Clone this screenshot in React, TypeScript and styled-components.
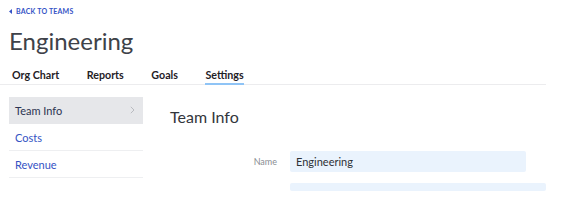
import React from "react";
import styled, { createGlobalStyle } from "styled-components";

const GlobalStyle = createGlobalStyle`
  body {
    margin: 0;
    background: #ffffff;
    font-family: Lato, "Open Sans", Arial, sans-serif;
    color: #333;
  }
`;

const Page = styled.div`
  width: 579px;
  height: 204px;
  overflow: hidden;
`;

const Header = styled.div`
  padding: 7px 0 0 9px;
`;

const BackLink = styled.a`
  display: flex;
  align-items: center;
  gap: 4px;
  font-size: 7px;
  font-weight: 700;
  letter-spacing: 0.2px;
  color: #3553c6;
  text-transform: uppercase;
  text-decoration: none;
  line-height: 9px;
`;

const Title = styled.h1`
  margin: 11px 0 0;
  font-size: 24px;
  font-weight: 400;
  line-height: 28px;
  color: #3e4249;
`;

const TabBar = styled.div`
  display: flex;
  gap: 27.5px;
  width: 534px;
  margin-top: 13px;
  padding-left: 12px;
  border-bottom: 1px solid #ececee;
`;

const Tab = styled.div<{ $active?: boolean }>`
  position: relative;
  font-size: 10.7px;
  font-weight: 700;
  line-height: 14px;
  padding-bottom: 2px;
  color: #1f2126;

  &::after {
    content: "";
    position: absolute;
    left: 0;
    right: 0;
    bottom: -1px;
    height: 2px;
    background: ${({ $active }) => ($active ? "#8fc4f6" : "transparent")};
  }
`;

const Body = styled.div`
  display: flex;
  padding: 12px 0 0 9px;
`;

const Sidebar = styled.div`
  width: 134px;
  display: flex;
  flex-direction: column;
`;

const SideItem = styled.div<{ $active?: boolean }>`
  display: flex;
  align-items: center;
  justify-content: space-between;
  height: 26px;
  padding: 0 8px 0 6px;
  font-size: 11px;
  color: ${({ $active }) => ($active ? "#2c3452" : "#3453c4")};
  background: ${({ $active }) => ($active ? "#e6e7ea" : "transparent")};
  border-bottom: 1px solid ${({ $active }) => ($active ? "#e6e7ea" : "#eeeff1")};
`;

const Main = styled.div`
  margin-left: 27px;
  flex: 1;
`;

const SectionTitle = styled.h2`
  margin: 10px 0 0;
  font-size: 16px;
  font-weight: 400;
  line-height: 20px;
  color: #33363c;
`;

const Form = styled.div`
  display: flex;
  flex-direction: column;
  gap: 11px;
  margin-top: 24px;
`;

const Row = styled.div`
  display: flex;
  align-items: center;
`;

const Label = styled.label`
  width: 107px;
  text-align: right;
  padding-right: 13px;
  font-size: 9px;
  color: #8a8d93;
`;

const Input = styled.div<{ $width: number; $height: number }>`
  width: ${({ $width }) => $width}px;
  height: ${({ $height }) => $height}px;
  box-sizing: border-box;
  padding-left: 6px;
  display: flex;
  align-items: center;
  background: #eaf3fd;
  border-radius: 2px;
  font-size: 11px;
  color: #2e3136;
`;

export default function App() {
  return (
    <Page>
      <GlobalStyle />
      <Header>
        <BackLink href="#">
          <svg width="3" height="5" viewBox="0 0 3 5">
            <path d="M3 0 L0 2.5 L3 5 Z" fill="#3553c6" />
          </svg>
          Back to Teams
        </BackLink>
        <Title>Engineering</Title>
      </Header>
      <TabBar>
        <Tab>Org Chart</Tab>
        <Tab>Reports</Tab>
        <Tab>Goals</Tab>
        <Tab $active>Settings</Tab>
      </TabBar>
      <Body>
        <Sidebar>
          <SideItem $active>
            Team Info
            <svg width="5" height="8" viewBox="0 0 5 8">
              <path d="M0.8 0.8 L4 4 L0.8 7.2" fill="none" stroke="#b9bbc0" strokeWidth="1" />
            </svg>
          </SideItem>
          <SideItem>Costs</SideItem>
          <SideItem>Revenue</SideItem>
        </Sidebar>
        <Main>
          <SectionTitle>Team Info</SectionTitle>
          <Form>
            <Row>
              <Label>Name</Label>
              <Input $width={236} $height={21}>Engineering</Input>
            </Row>
            <Row>
              <Label />
              <Input $width={256} $height={8} />
            </Row>
          </Form>
        </Main>
      </Body>
    </Page>
  );
}
